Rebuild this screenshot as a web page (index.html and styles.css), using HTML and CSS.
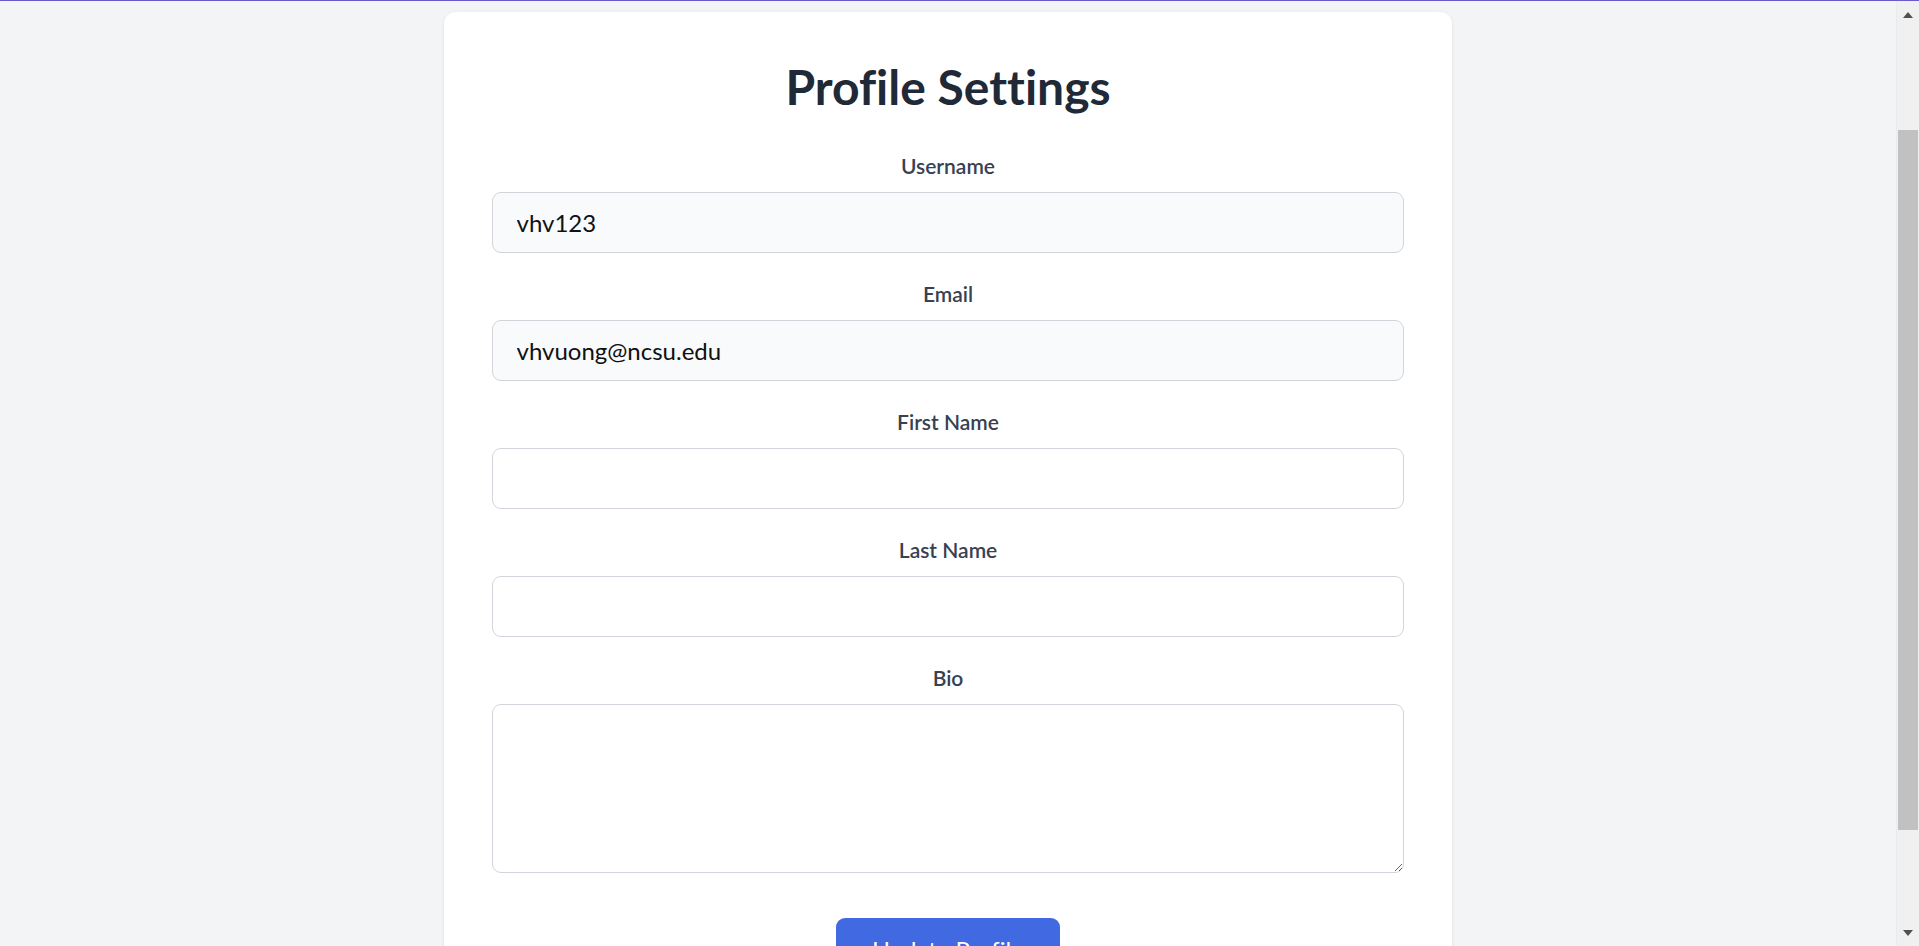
FILE: index.html
```html
<!DOCTYPE html>
<html lang="en">
<head>
<meta charset="utf-8">
<title>Profile Settings</title>
<link rel="stylesheet" href="styles.css">
</head>
<body>
  <div class="page">
    <main class="card">
      <h1 class="title">Profile Settings</h1>
      <form class="form">
        <div class="field">
          <label class="label" for="username">Username</label>
          <input class="input input-readonly" id="username" type="text" value="vhv123" readonly>
        </div>
        <div class="field">
          <label class="label" for="email">Email</label>
          <input class="input input-readonly" id="email" type="email" value="vhvuong@ncsu.edu" readonly>
        </div>
        <div class="field">
          <label class="label" for="first">First Name</label>
          <input class="input" id="first" type="text">
        </div>
        <div class="field">
          <label class="label" for="last">Last Name</label>
          <input class="input" id="last" type="text">
        </div>
        <div class="field">
          <label class="label" for="bio">Bio</label>
          <textarea class="input textarea" id="bio"></textarea>
        </div>
        <div class="actions">
          <button class="btn" type="button">Update Profile</button>
        </div>
      </form>
    </main>
  </div>
  <div class="scrollbar">
    <div class="sb-btn"><span class="arrow-up"></span></div>
    <div class="sb-track"><div class="sb-thumb"></div></div>
    <div class="sb-btn"><span class="arrow-down"></span></div>
  </div>
</body>
</html>
```
FILE: styles.css
```css
* { box-sizing: border-box; }

html, body {
  margin: 0;
  height: 946px;
  overflow: hidden;
}

body {
  display: flex;
  border-top: 1px solid #6a5acd;
  background: #f3f4f6;
  font-family: Lato, "Open Sans", sans-serif;
  font-variant-ligatures: no-common-ligatures;
}

.page {
  flex: 1;
  padding-top: 11px;
  overflow: hidden;
}

.card {
  width: 1008px;
  margin: 0 auto;
  background: #ffffff;
  border-radius: 12px;
  box-shadow: 0 1px 4px rgba(0, 0, 0, 0.08);
  padding: 48px 48px 60px;
}

.title {
  margin: 0 0 36px;
  font-size: 48px;
  line-height: 54px;
  font-weight: 700;
  color: #1f2937;
  text-align: center;
}

.form {
  display: flex;
  flex-direction: column;
}

.field {
  display: flex;
  flex-direction: column;
  margin-bottom: 25px;
}

.label {
  display: block;
  font-size: 21px;
  line-height: 30px;
  font-weight: 600;
  color: #374151;
  text-align: center;
  padding-top: 0.5px;
  margin-bottom: 11.5px;
}

.input {
  width: 100%;
  height: 61px;
  border: 1.5px solid #d1d5db;
  border-radius: 9px;
  padding: 0 23.5px;
  font-family: inherit;
  font-variant-ligatures: no-common-ligatures;
  font-size: 24px;
  color: #111111;
  background: #ffffff;
  outline: none;
}

.input-readonly {
  background: #f9fafb;
}

.textarea {
  height: 169px;
  padding: 12px 23.5px;
  resize: vertical;
  display: block;
}

.actions {
  display: flex;
  justify-content: center;
  margin-top: 20px;
}

.btn {
  height: 63px;
  padding: 0 36px;
  border: none;
  border-radius: 9px;
  background: #4169e1;
  color: #ffffff;
  font-family: inherit;
  font-variant-ligatures: no-common-ligatures;
  font-size: 24px;
}

.scrollbar {
  width: 23px;
  flex: none;
  display: flex;
  flex-direction: column;
  background: #f0f0f0;
  border-left: 1px solid #ebebeb;
}

.sb-btn {
  height: 17px;
  display: flex;
  align-items: center;
  justify-content: center;
}

.sb-track {
  flex: 1;
  padding: 112px 1px 0;
}

.sb-thumb {
  height: 700px;
  background: #c1c1c1;
}

.arrow-up {
  width: 0;
  height: 0;
  border-left: 5.5px solid transparent;
  border-right: 5.5px solid transparent;
  border-bottom: 6px solid #505050;
  margin-top: 10px;
}

.arrow-down {
  width: 0;
  height: 0;
  border-left: 5.5px solid transparent;
  border-right: 5.5px solid transparent;
  border-top: 6px solid #505050;
  margin-bottom: 10px;
}
```
